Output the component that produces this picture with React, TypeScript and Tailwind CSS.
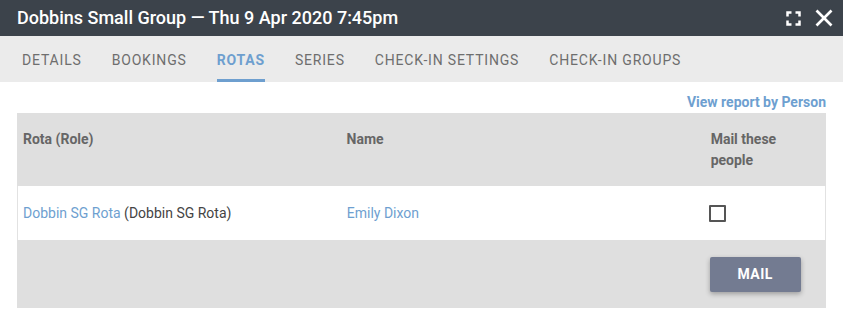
import React from "react";

const tabs = ["Details", "Bookings", "Rotas", "Series", "Check-in Settings", "Check-in Groups"];

function ExpandIcon() {
  return (
    <svg width="15" height="15" viewBox="0 0 15 15" fill="none" stroke="white" strokeWidth="2.5">
      <path d="M1.5 5.5V1.5H5.5" />
      <path d="M9.5 1.5H13.5V5.5" />
      <path d="M13.5 9.5V13.5H9.5" />
      <path d="M5.5 13.5H1.5V9.5" />
    </svg>
  );
}

function CloseIcon() {
  return (
    <svg width="18" height="18" viewBox="0 0 18 18" fill="none" stroke="white" strokeWidth="2.6">
      <path d="M1.5 1.5L16.5 16.5" />
      <path d="M16.5 1.5L1.5 16.5" />
    </svg>
  );
}

export default function App() {
  return (
    <div className="w-[843px] h-[325px] bg-white font-['Roboto',sans-serif] overflow-hidden">
      {/* Header */}
      <div className="h-[36px] bg-[#3c434b] flex items-center justify-between pl-[17px] pr-[10px]">
        <h1 className="text-white text-[18px] font-medium leading-none">
          Dobbins Small Group — Thu 9 Apr 2020 7:45pm
        </h1>
        <div className="flex items-center gap-[14px]">
          <ExpandIcon />
          <CloseIcon />
        </div>
      </div>

      {/* Tabs */}
      <div className="h-[46px] bg-[#ebebeb] flex items-stretch pl-[7px]">
        {tabs.map((tab) => {
          const active = tab === "Rotas";
          return (
            <div key={tab} className="px-[15px] flex items-stretch">
              <div
                className={`flex items-center uppercase text-[14px] tracking-[0.82px] border-b-[3px] pt-[5px] ${
                  active
                    ? "text-[#6e9fcf] font-bold border-[#6e9fcf]"
                    : "text-[#6e6e6e] border-transparent"
                }`}
              >
                {tab}
              </div>
            </div>
          );
        })}
      </div>

      {/* Content */}
      <div className="px-[17px]">
        <div className="flex justify-end h-[31px] items-center pt-[9px]">
          <a className="text-[14px] font-bold text-[#6e9fd0] leading-none">View report by Person</a>
        </div>

        <div className="w-[809px]">
          {/* Table header */}
          <div className="flex h-[73px] bg-[#dfdfdf] text-[14px] font-bold text-[#666] leading-[21px]">
            <div className="w-[40%] pl-[6px] pt-[16px]">Rota (Role)</div>
            <div className="w-[45%] pl-[6px] pt-[16px]">Name</div>
            <div className="w-[15%] pl-[6px] pt-[16px]">
              <div className="w-[80px]">Mail these people</div>
            </div>
          </div>

          {/* Row */}
          <div className="flex h-[54px] items-center text-[14px] text-[#444] border-x border-[#e2e2e2]">
            <div className="w-[40%] pl-[5px]">
              <span className="text-[#6e9fd0]">Dobbin SG Rota</span> (Dobbin SG Rota)
            </div>
            <div className="w-[45%] pl-[6px] text-[#6e9fd0]">Emily Dixon</div>
            <div className="w-[15%] pl-[5px] flex items-center">
              <div className="w-[17px] h-[17px] border-2 border-[#555] rounded-[1px]" />
            </div>
          </div>

          {/* Footer */}
          <div className="flex h-[68px] items-center bg-[#dfdfdf]">
            <div className="w-[40%]" />
            <div className="w-[45%]" />
            <div className="w-[15%] pl-[5px] pt-[1px]">
              <button className="w-[91px] h-[35px] bg-[#737b91] text-white text-[14px] tracking-[0.5px] font-bold rounded-[2px] shadow-[0_2px_5px_rgba(0,0,0,0.3)]">
                MAIL
              </button>
            </div>
          </div>
        </div>
      </div>
    </div>
  );
}
